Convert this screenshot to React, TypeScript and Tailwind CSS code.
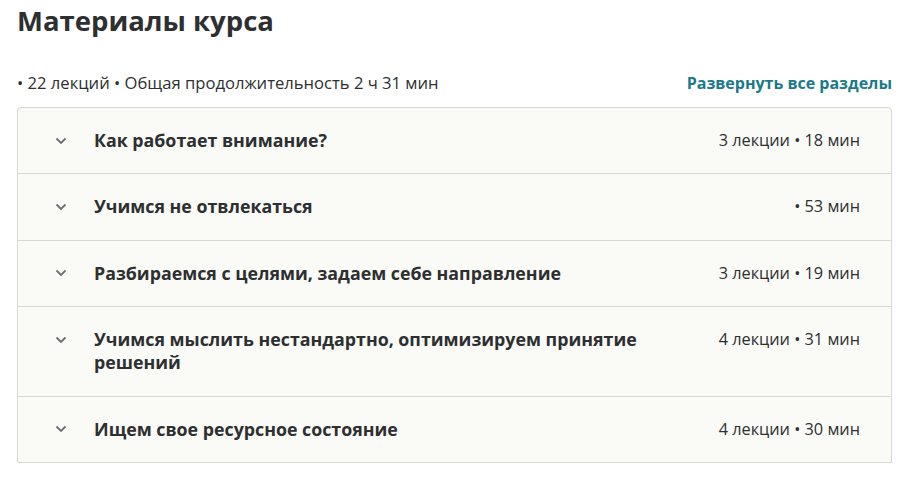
const SECTIONS = [
  { title: 'Как работает внимание?', meta: '3 лекции • 18 мин' },
  { title: 'Учимся не отвлекаться', meta: '• 53 мин' },
  { title: 'Разбираемся с целями, задаем себе направление', meta: '3 лекции • 19 мин' },
  { title: 'Учимся мыслить нестандартно, оптимизируем принятие решений', meta: '4 лекции • 31 мин' },
  { title: 'Ищем свое ресурсное состояние', meta: '4 лекции • 30 мин' },
]

function Chevron() {
  return (
    <svg viewBox="0 0 12 8" className="h-[8px] w-[12px] shrink-0" aria-hidden>
      <path d="M1.5 1.5 6 6l4.5-4.5" fill="none" stroke="#6a6f73" strokeWidth="1.8" />
    </svg>
  )
}

export default function App() {
  return (
    <div className="min-h-screen bg-white pl-[17px] pr-[30px] pt-[2px] text-[#2d2f31] [font-family:'Open_Sans',sans-serif]">
      <h2 className="text-[27.5px] font-bold leading-[38px]">Материалы курса</h2>
      <div className="mt-[31px] flex items-center justify-between leading-[24px]">
        <span className="text-[16.6px]">• 22 лекций • Общая продолжительность 2 ч 31 мин</span>
        <button className="text-[16px] font-bold text-[#1a7a8a]">Развернуть все разделы</button>
      </div>
      <div className="mt-[12px] overflow-hidden rounded-t-[4px] border border-[#d9d9cf] bg-[#fafaf6]">
        {SECTIONS.map((s, i) => (
          <div
            key={s.title}
            className={`flex items-start gap-[27px] pb-[21.4px] pl-[37px] pr-[31px] pt-[21px] ${i > 0 ? 'border-t border-[#d9d9cf]' : ''}`}
          >
            <div className="flex h-[23px] items-center">
              <Chevron />
            </div>
            <h3 className="flex-1 pr-[40px] text-[17.8px] font-bold leading-[23px]">{s.title}</h3>
            <span className="text-[16.3px] leading-[23px]">{s.meta}</span>
          </div>
        ))}
      </div>
    </div>
  )
}
